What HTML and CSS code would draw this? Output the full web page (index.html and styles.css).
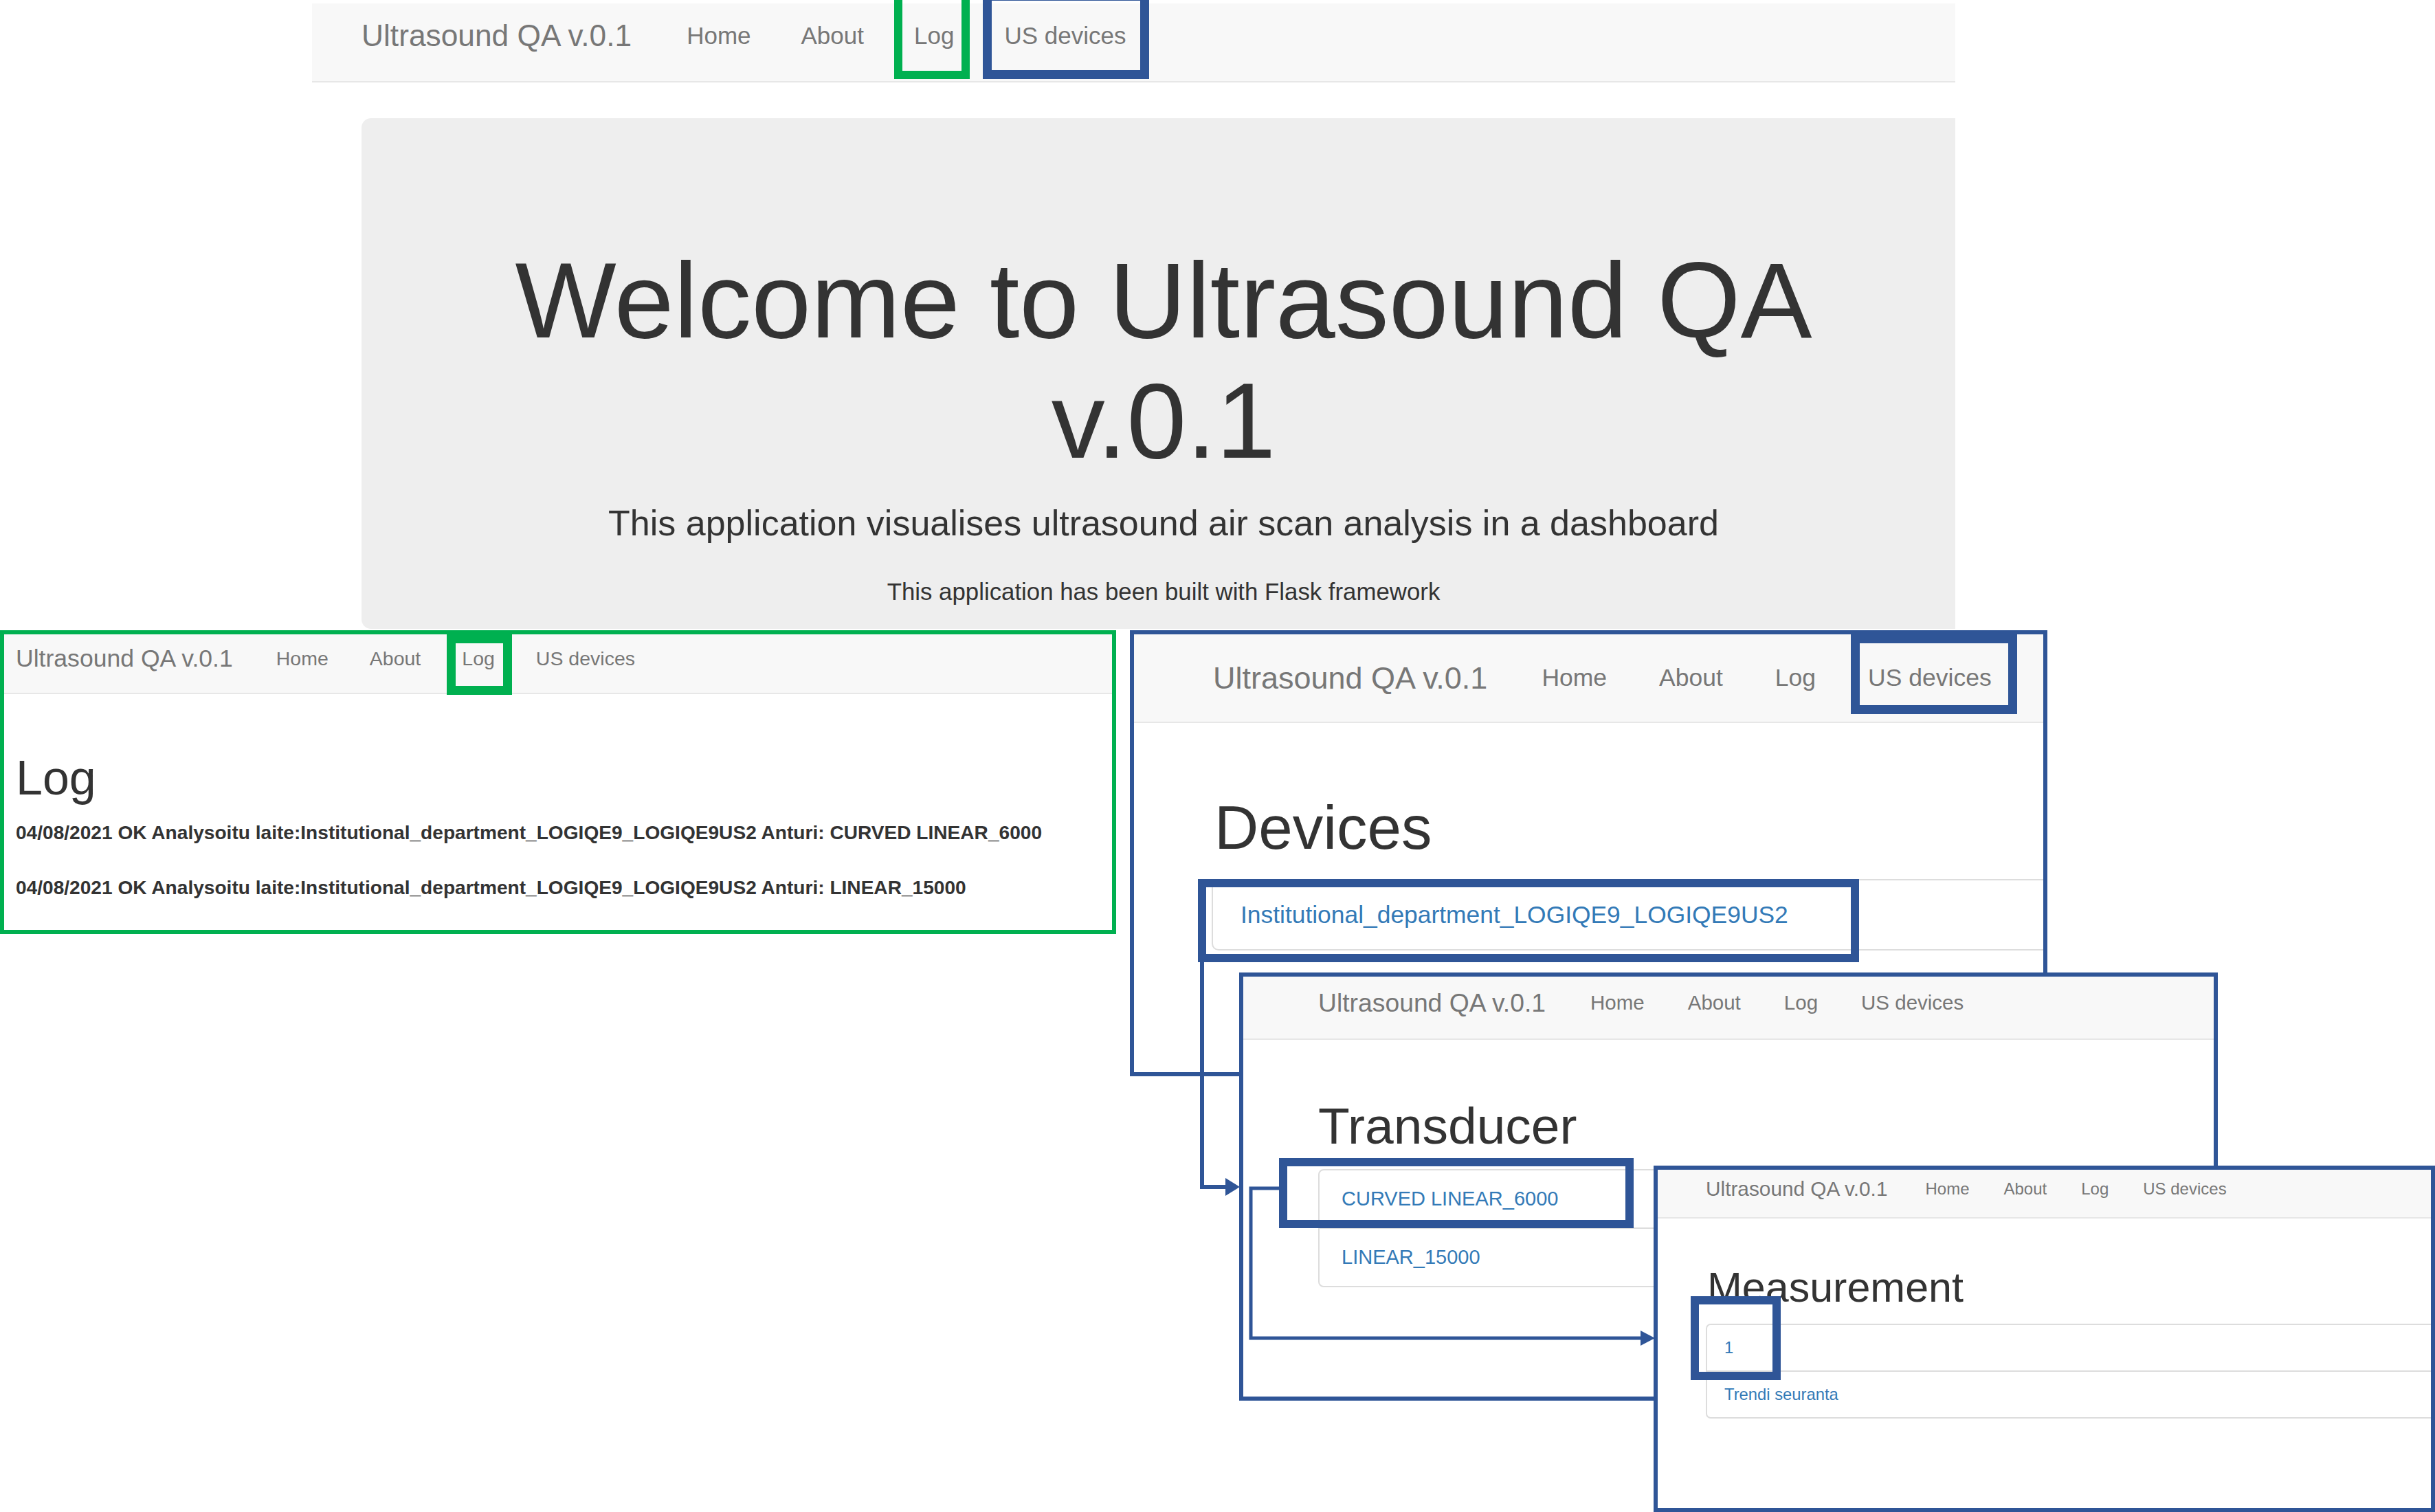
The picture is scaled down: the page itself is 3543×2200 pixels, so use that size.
FILE: index.html
```html
<!DOCTYPE html>
<html lang="en">
<head>
<meta charset="utf-8">
<title>Ultrasound QA v.0.1 – page flow</title>
<link rel="stylesheet" href="styles.css">
</head>
<body>
<div class="sheet">

  <header class="navbar navbar--main">
    <span class="brand">Ultrasound QA v.0.1</span>
    <ul class="nav-links">
      <li>Home</li>
      <li>About</li>
      <li>Log</li>
      <li>US devices</li>
    </ul>
    <span class="mark mark--green mark--main-log"></span>
    <span class="mark mark--blue mark--main-dev"></span>
  </header>

  <section class="jumbotron">
    <h1 class="jumbo-title">Welcome to Ultrasound QA v.0.1</h1>
    <p class="jumbo-lead">This application visualises ultrasound air scan analysis in a dashboard</p>
    <p class="jumbo-note">This application has been built with Flask framework</p>
  </section>

  <div class="shot shot--log">
    <div class="navbar">
      <span class="brand">Ultrasound QA v.0.1</span>
      <ul class="nav-links">
        <li>Home</li>
        <li>About</li>
        <li>Log</li>
        <li>US devices</li>
      </ul>
    </div>
    <div class="content">
      <h1 class="page-title">Log</h1>
      <p class="log-line">04/08/2021 OK Analysoitu laite:Institutional_department_LOGIQE9_LOGIQE9US2 Anturi: CURVED LINEAR_6000</p>
      <p class="log-line">04/08/2021 OK Analysoitu laite:Institutional_department_LOGIQE9_LOGIQE9US2 Anturi: LINEAR_15000</p>
    </div>
    <span class="mark mark--green mark--log-nav"></span>
  </div>

  <div class="shot shot--devices">
    <div class="navbar">
      <span class="brand">Ultrasound QA v.0.1</span>
      <ul class="nav-links">
        <li>Home</li>
        <li>About</li>
        <li>Log</li>
        <li>US devices</li>
      </ul>
    </div>
    <div class="content">
      <h1 class="page-title">Devices</h1>
      <ul class="list-group">
        <li class="list-item">Institutional_department_LOGIQE9_LOGIQE9US2</li>
      </ul>
    </div>
    <span class="mark mark--blue mark--dev-nav"></span>
    <span class="mark mark--blue mark--dev-item"></span>
  </div>

  <div class="shot shot--transducer">
    <div class="navbar">
      <span class="brand">Ultrasound QA v.0.1</span>
      <ul class="nav-links">
        <li>Home</li>
        <li>About</li>
        <li>Log</li>
        <li>US devices</li>
      </ul>
    </div>
    <div class="content">
      <h1 class="page-title">Transducer</h1>
      <ul class="list-group">
        <li class="list-item">CURVED LINEAR_6000</li>
        <li class="list-item">LINEAR_15000</li>
      </ul>
    </div>
    <span class="mark mark--blue mark--tr-item"></span>
  </div>

  <div class="shot shot--measure">
    <div class="navbar">
      <span class="brand">Ultrasound QA v.0.1</span>
      <ul class="nav-links">
        <li>Home</li>
        <li>About</li>
        <li>Log</li>
        <li>US devices</li>
      </ul>
    </div>
    <div class="content">
      <h1 class="page-title">Measurement</h1>
      <ul class="list-group">
        <li class="list-item">1</li>
        <li class="list-item">Trendi seuranta</li>
      </ul>
    </div>
    <span class="mark mark--blue mark--ms-item"></span>
  </div>

  <svg class="connectors" width="3543" height="2200" viewBox="0 0 3543 2200" aria-hidden="true">
    <path d="M1749 1396 V1727 H1786" fill="none" stroke="#2f5597" stroke-width="6"/>
    <polygon points="1783,1714 1804,1727 1783,1740" fill="#2f5597"/>
    <path d="M1862 1729 H1820 V1947 H2390" fill="none" stroke="#2f5597" stroke-width="5"/>
    <polygon points="2387,1936 2408,1947 2387,1958" fill="#2f5597"/>
  </svg>

</div>
</body>
</html>
```

FILE: styles.css
```css
html, body {
  margin: 0;
  padding: 0;
  background: #ffffff;
}

.sheet {
  position: relative;
  width: 3543px;
  height: 2200px;
  overflow: hidden;
  background: #ffffff;
  font-family: "Liberation Sans", Arial, sans-serif;
  color: #333333;
}

/* ---------- navbar (shared) ---------- */
.navbar {
  position: relative;
  display: flex;
  align-items: center;
  box-sizing: border-box;
  height: var(--nav-h);
  padding-left: var(--nav-pl);
  padding-bottom: var(--nav-pb, 0px);
  background: #f8f8f8;
  border-bottom: 2px solid #e7e7e7;
  white-space: nowrap;
}

.brand {
  font-size: var(--brand-fs);
  color: #777777;
  margin-right: var(--brand-mr);
}

.nav-links {
  display: flex;
  gap: var(--link-gap);
  list-style: none;
  margin: 0;
  padding: 0;
  font-size: var(--link-fs);
  color: #777777;
}

/* ---------- main page ---------- */
.navbar--main {
  --nav-h: 115px;
  --nav-pl: 72px;
  --nav-pb: 20px;
  --brand-fs: 44.3px;
  --brand-mr: 80px;
  --link-fs: 35px;
  --link-gap: 73px;
  margin-top: 5px;
  margin-left: 454px;
  width: 2391px;
}

.jumbotron {
  box-sizing: border-box;
  margin-top: 52px;
  margin-left: 526px;
  width: 2319px;
  height: 743px;
  padding: 178px 135px 0 150px;
  background: #eeeeee;
  border-radius: 14px 0 0 14px;
  text-align: center;
}

.jumbo-title {
  margin: 0;
  font-size: 156px;
  line-height: 175px;
  font-weight: 400;
  color: #333333;
}

.jumbo-lead {
  margin: 31px 0 0;
  font-size: 52px;
  line-height: 61px;
  color: #333333;
}

.jumbo-note {
  margin: 49px 0 0;
  font-size: 34.8px;
  line-height: 40px;
  color: #333333;
}

/* ---------- annotation marks ---------- */
.mark {
  position: absolute;
  box-sizing: border-box;
  z-index: 5;
}

.mark--green { border: 12px solid #00b050; }
.mark--blue  { border: 12px solid #2f5597; }

.mark--main-log { left: 847px; top: -17px; width: 110px; height: 127px; }
.mark--main-dev { left: 976px; top: -17px; width: 242px; height: 127px; border-width: 13px; }

/* ---------- screenshot panels ---------- */
.shot {
  position: absolute;
  box-sizing: border-box;
  border: 6px solid #2f5597;
  background: #ffffff;
  overflow: hidden;
}

.content {
  padding-left: var(--content-pl);
}

.page-title {
  margin: var(--h-mt) 0 var(--h-mb);
  font-size: var(--h-fs);
  line-height: 1.1;
  font-weight: 400;
  color: #333333;
  white-space: nowrap;
}

.list-group {
  list-style: none;
  margin: 0 0 0 var(--list-ml, 0px);
  padding: 0;
  width: 1400px;
}

.list-item {
  box-sizing: border-box;
  border: 2px solid #dddddd;
  margin-bottom: -2px;
  padding: var(--item-py) var(--item-px);
  font-size: var(--item-fs);
  line-height: var(--item-lh);
  color: #337ab7;
  white-space: nowrap;
}

.list-item:first-child { border-radius: var(--item-r) var(--item-r) 0 0; }
.list-item:last-child  { border-radius: 0 0 var(--item-r) var(--item-r); }
.list-item:only-child  { border-radius: var(--item-r); }

/* Log panel */
.shot--log {
  left: 0;
  top: 917px;
  width: 1624px;
  height: 442px;
  border-color: #00b050;
  z-index: 2;
  --nav-h: 87px;
  --nav-pl: 17px;
  --nav-pb: 14px;
  --brand-fs: 35.6px;
  --brand-mr: 63px;
  --link-fs: 28.5px;
  --link-gap: 60px;
  --content-pl: 17px;
  --h-fs: 70px;
  --h-mt: 84px;
  --h-mb: 21px;
}

.log-line {
  margin: 0 0 40px;
  font-size: 28.1px;
  line-height: 40px;
  font-weight: 700;
  color: #333333;
  white-space: nowrap;
}

.mark--log-nav { left: 644px; top: 0; width: 95px; height: 88px; border-width: 13px; }

/* Devices panel */
.shot--devices {
  left: 1644px;
  top: 917px;
  width: 1335px;
  height: 649px;
  z-index: 2;
  --nav-h: 129px;
  --nav-pl: 115px;
  --brand-fs: 45px;
  --brand-mr: 79px;
  --link-fs: 35.5px;
  --link-gap: 76px;
  --content-pl: 117px;
  --h-fs: 89px;
  --h-mt: 104px;
  --h-mb: 25px;
  --list-ml: -4px;
  --item-fs: 35.4px;
  --item-lh: 48px;
  --item-py: 26px;
  --item-px: 40px;
  --item-r: 10px;
}

.mark--dev-nav  { left: 1043px; top: 0; width: 242px; height: 116px; border-width: 13px; }
.mark--dev-item { left: 93px; top: 356px; width: 962px; height: 121px; }

/* Transducer panel */
.shot--transducer {
  left: 1803px;
  top: 1415px;
  width: 1424px;
  height: 623px;
  z-index: 3;
  --nav-h: 92px;
  --nav-pl: 109px;
  --nav-pb: 14px;
  --brand-fs: 37.3px;
  --brand-mr: 65px;
  --link-fs: 29.5px;
  --link-gap: 63px;
  --content-pl: 109px;
  --h-fs: 75px;
  --h-mt: 84px;
  --h-mb: 21px;
  --item-fs: 29px;
  --item-lh: 41px;
  --item-py: 21px;
  --item-px: 32px;
  --item-r: 8px;
}

.mark--tr-item { left: 52px; top: 264px; width: 516px; height: 102px; }

/* Measurement panel */
.shot--measure {
  left: 2406px;
  top: 1696px;
  width: 1137px;
  height: 504px;
  z-index: 4;
  --nav-h: 71px;
  --nav-pl: 70px;
  --nav-pb: 14px;
  --brand-fs: 29.8px;
  --brand-mr: 55px;
  --link-fs: 24px;
  --link-gap: 50px;
  --content-pl: 72px;
  --h-fs: 61px;
  --h-mt: 67px;
  --h-mb: 19px;
  --list-ml: -2px;
  --item-fs: 23.8px;
  --item-lh: 34px;
  --item-py: 16px;
  --item-px: 25px;
  --item-r: 7px;
}

.mark--ms-item { left: 48px; top: 184px; width: 131px; height: 122px; }

/* connectors */
.connectors {
  position: absolute;
  left: 0;
  top: 0;
  z-index: 10;
  pointer-events: none;
}
```
